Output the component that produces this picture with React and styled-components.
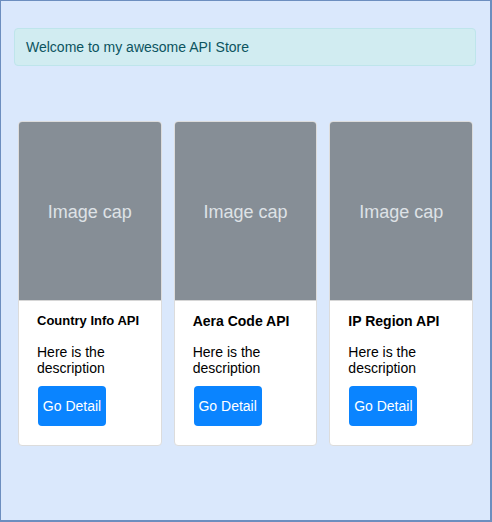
import React from "react";
import styled, { createGlobalStyle } from "styled-components";

const Global = createGlobalStyle`
  html, body { margin: 0; padding: 0; background: #dae8fc; }
  body { font-family: "Liberation Sans", Arial, sans-serif; }
`;

const Frame = styled.div`
  box-sizing: border-box;
  width: 492px;
  height: 522px;
  background: #dae8fc;
  border: 1px solid #6c8ebf;
  border-right-width: 2px;
  border-bottom-width: 2px;
  padding: 27px 14px 0 13px;
  display: flex;
  flex-direction: column;
`;

const Alert = styled.div`
  background: #d1ecf1;
  border: 1px solid #bee5eb;
  border-radius: 4px;
  color: #0c5460;
  font-size: 14px;
  line-height: 16px;
  padding: 10px 11px;
`;

const CardRow = styled.div`
  display: flex;
  gap: 12px;
  margin-top: 55px;
  padding: 0 3px 0 4px;
`;

const Card = styled.div`
  width: 144px;
  box-sizing: border-box;
  background: #fff;
  border: 1px solid #dcdcdc;
  border-radius: 4px;
  overflow: hidden;
  display: flex;
  flex-direction: column;
`;

const ImageCap = styled.div`
  height: 179px;
  background: #868e96;
  border-bottom: 1px solid #d6d6d6;
  color: #dee2e6;
  font-size: 18px;
  padding-top: 2px;
  box-sizing: border-box;
  display: flex;
  align-items: center;
  justify-content: center;
`;

const Body = styled.div`
  padding: 12px 18px 19px 18px;
  display: flex;
  flex-direction: column;
  align-items: flex-start;
`;

const Title = styled.div`
  font-weight: bold;
  font-size: ${(p) => p.$size}px;
  line-height: 16px;
  color: #000;
  white-space: nowrap;
`;

const Desc = styled.div`
  margin-top: 15px;
  font-size: 14px;
  line-height: 16px;
  color: #000;
`;

const Button = styled.button`
  margin: 10px 0 0 1px;
  width: 68px;
  height: 40px;
  padding: 0;
  background: #0a84ff;
  color: #fff;
  border: none;
  border-radius: 4px;
  font-family: "Liberation Sans", Arial, sans-serif;
  font-size: 14px;
  line-height: 16px;
`;

const apis = [
  { name: "Country Info API", size: 13 },
  { name: "Aera Code API", size: 14 },
  { name: "IP Region API", size: 14 },
];

export default function App() {
  return (
    <>
      <Global />
      <Frame>
        <Alert>Welcome to my awesome API Store</Alert>
        <CardRow>
          {apis.map((a) => (
            <Card key={a.name}>
              <ImageCap>Image cap</ImageCap>
              <Body>
                <Title $size={a.size}>{a.name}</Title>
                <Desc>
                  Here is the
                  <br />
                  description
                </Desc>
                <Button>Go Detail</Button>
              </Body>
            </Card>
          ))}
        </CardRow>
      </Frame>
    </>
  );
}
